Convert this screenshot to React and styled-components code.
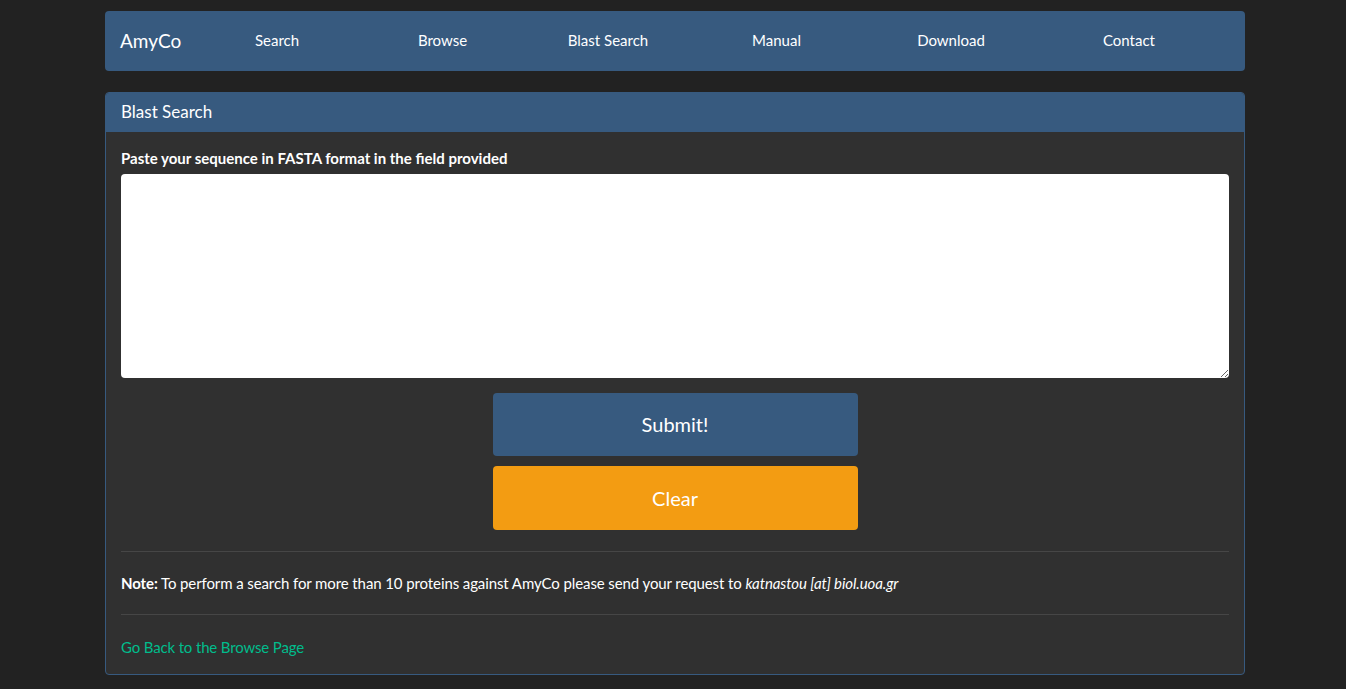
import React, { useState } from "react";
import styled, { createGlobalStyle } from "styled-components";

const GlobalStyle = createGlobalStyle`
   html, body {
      margin: 0;
      padding: 0;
      background: #222222;
      color: #ffffff;
      font-family: Lato, "Open Sans", "Liberation Sans", sans-serif;
      font-size: 15px;
   }
   * {
      box-sizing: border-box;
   }
`;

const Page = styled("div")`
   padding-left: 4px;
`;

const Container = styled("div")`
   width: 1140px;
   margin: 0 auto;
   padding-top: 11px;
   padding-bottom: 14px;
`;

const NavBar = styled("nav")`
   display: flex;
   align-items: center;
   height: 60px;
   background: #375a7f;
   border-radius: 4px;
   padding: 0 15px 2px;
   margin-bottom: 21px;
`;

const Brand = styled("a")`
   font-size: 19px;
   color: #ffffff;
   text-decoration: none;
   width: 74px;
`;

const NavList = styled("ul")`
   list-style: none;
   margin: 0;
   padding: 0;
   display: grid;
   grid-template-columns: 166px 165px 166px 171px 178px 178px;
`;

const NavItem = styled("li")`
   text-align: center;
   a {
      color: #ffffff;
      text-decoration: none;
      font-size: 15px;
   }
`;

const Panel = styled("section")`
   background: #303030;
   border: 1px solid #375a7f;
   border-radius: 4px;
   overflow: hidden;
`;

const PanelHeading = styled("div")`
   height: 39px;
   display: flex;
   align-items: center;
   padding: 0 15px 2px;
   background: #375a7f;
   font-size: 17px;
`;

const PanelBody = styled("div")`
   padding: 15px 15px 17px;
`;

const Label = styled("label")`
   display: block;
   font-weight: 700;
   font-size: 15px;
   line-height: 22px;
   margin-bottom: 5px;
`;

const SeqArea = styled("textarea")`
   display: block;
   width: 100%;
   height: 204px;
   border: none;
   border-radius: 4px;
   background: #ffffff;
   padding: 6px 12px;
   font-family: "Liberation Mono", monospace;
   font-size: 14px;
   color: #222;
   outline: none;
`;

const ButtonStack = styled("div")`
   display: flex;
   flex-direction: column;
   align-items: center;
   gap: 10px;
   margin-top: 15px;
`;

const ActionButton = styled("button")`
   width: 365px;
   height: ${(p) => p.$h}px;
   border: none;
   border-radius: 4px;
   background: ${(p) => p.$bg};
   color: #ffffff;
   font-family: Lato, "Liberation Sans", sans-serif;
   font-size: 20px;
   padding-bottom: 2px;
   cursor: pointer;
`;

const Rule = styled("hr")`
   border: none;
   border-top: 1px solid #464646;
   margin: 21px 0;
`;

const Note = styled("p")`
   margin: 0;
   font-size: 15px;
   line-height: 20px;
   letter-spacing: -0.1px;
`;

const BackLink = styled("a")`
   display: block;
   color: #00bc8c;
   text-decoration: none;
   font-size: 15px;
   line-height: 20px;
   letter-spacing: -0.15px;
   padding-top: 1px;
`;

const links = ["Search", "Browse", "Blast Search", "Manual", "Download", "Contact"];

const App = () => {
   const [seq, setSeq] = useState("");
   return (
      <>
         <GlobalStyle />
         <Page>
            <Container>
               <NavBar>
                  <Brand href="#">AmyCo</Brand>
                  <NavList>
                     {links.map((l) => (
                        <NavItem key={l}>
                           <a href="#">{l}</a>
                        </NavItem>
                     ))}
                  </NavList>
               </NavBar>
               <Panel>
                  <PanelHeading>Blast Search</PanelHeading>
                  <PanelBody>
                     <Label htmlFor="seq">
                        Paste your sequence in FASTA format in the field provided
                     </Label>
                     <SeqArea
                        id="seq"
                        value={seq}
                        onChange={(e) => setSeq(e.target.value)}
                     />
                     <ButtonStack>
                        <ActionButton $bg="#375a7f" $h={63} type="submit">
                           Submit!
                        </ActionButton>
                        <ActionButton
                           $bg="#f39c12"
                           $h={64}
                           type="button"
                           onClick={() => setSeq("")}
                        >
                           Clear
                        </ActionButton>
                     </ButtonStack>
                     <Rule />
                     <Note>
                        <strong>Note:</strong> To perform a search for more than 10
                        proteins against AmyCo please send your request to{" "}
                        <em>katnastou [at] biol.uoa.gr</em>
                     </Note>
                     <Rule />
                     <BackLink href="#">Go Back to the Browse Page</BackLink>
                  </PanelBody>
               </Panel>
            </Container>
         </Page>
      </>
   );
};

export default App;
